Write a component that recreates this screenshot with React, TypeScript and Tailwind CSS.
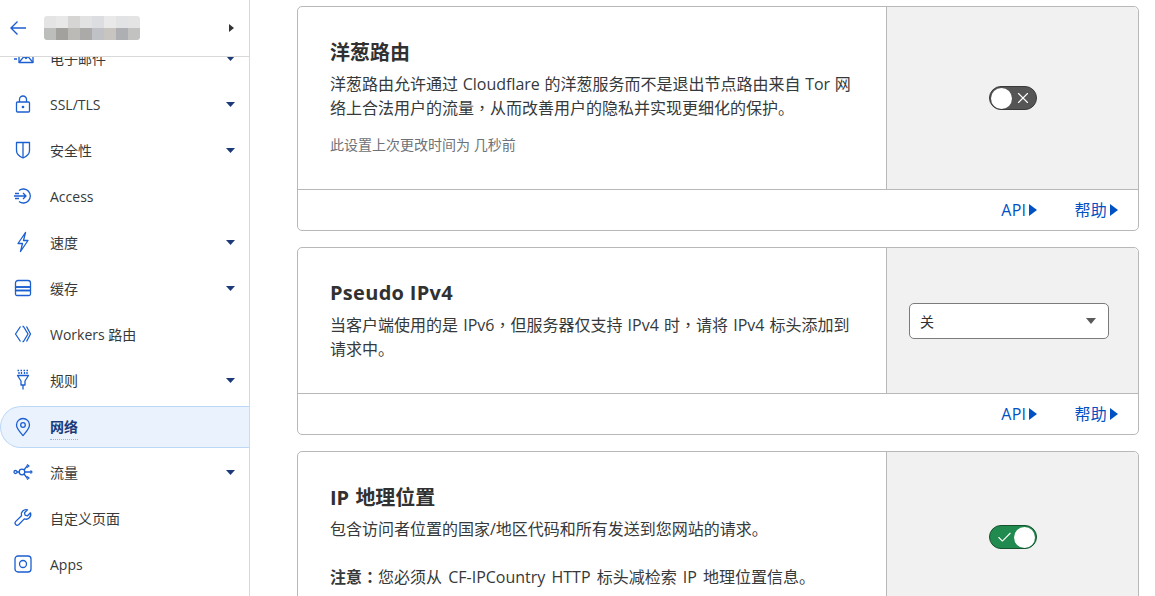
import React from 'react';
import { Check, X } from 'lucide-react';

const FONT = "font-['Open_Sans','Noto_Sans_CJK_SC',sans-serif]";

const Caret = () => (
  <svg width="9" height="5" viewBox="0 0 9 5" className="fill-[#1d3a78]">
    <path d="M0 0h9L4.500 5z" />
  </svg>
);

// the screenshot's full-width punctuation sits centred in its box
const Punct = ({ children }: { children: React.ReactNode }) => (
  <span className="leading-none font-['Noto_Sans_CJK_TC',sans-serif]">{children}</span>
);

const icons: Record<string, React.ReactNode> = {
  mail: (
    <>
      <path d="M8 3.500h14v13H8z" />
      <path d="M8 16.500l5-6 2 2 2-2 5 6M8 3.500l7 7 7-7" />
      <path d="M2 9h4M3 13h3" />
    </>
  ),
  lock: (
    <>
      <rect x="5.500" y="10" width="13" height="10" rx="1" />
      <path d="M8.500 10V7.500a3.500 3.500 0 0 1 7 0V10" />
      <circle cx="12" cy="15" r="0.7" />
    </>
  ),
  shield: (
    <>
      <path d="M5.500 4.500h13v8c0 3.500-3 6-6.500 7.500-3.500-1.500-6.500-4-6.500-7.500z" />
      <path d="M12 4.500V20" />
    </>
  ),
  access: (
    <>
      <path d="M3 12h12M12 9l3 3-3 3" />
      <path d="M8 6.500a7 7 0 1 1 0 11" />
      <path d="M4 9.500h4M4 14.500h4" />
    </>
  ),
  bolt: <path d="M14.500 2.500 7 13.500h4.500L9.500 21.500l7.500-11h-4.500z" />,
  stack: (
    <>
      <path d="M7 4.500h10a2.500 2.500 0 0 1 2.500 2.500v4h-15V7A2.500 2.500 0 0 1 7 4.500z" />
      <path d="M4.500 11h15v3.500h-15z" />
      <path d="M4.500 14.500h15v3.500a1.500 1.500 0 0 1-1.500 1.500H6A1.500 1.500 0 0 1 4.500 18z" />
    </>
  ),
  workers: (
    <>
      <path d="M9.500 4.500 4.500 12l5 7.500" />
      <path d="M11.500 4.500h1L17 12l-4.500 7.500h-1" />
      <path d="M15.500 4.500 19.500 12l-4 7.500" />
    </>
  ),
  rules: (
    <>
      <path d="M6.500 7.500h11L14 13v4h-4v-4z" />
      <path d="M8 4v2M10.500 4v2M13.500 4v2M16 4v2M12 17v4.500" />
      <path d="M6.500 2.500h11" strokeDasharray="1.500 1.500" />
    </>
  ),
  pin: (
    <>
      <path d="M12 20.500C8.500 16.500 5.500 13.500 5.500 10a6.500 6.500 0 0 1 13 0c0 3.500-3 6.500-6.500 10.500z" />
      <circle cx="12" cy="10" r="2.300" />
    </>
  ),
  traffic: (
    <>
      <circle cx="4.500" cy="12" r="1.500" />
      <circle cx="11" cy="12" r="2.800" />
      <path d="M6 12h2.200M13 10l3.500-4.500M13 14l3.500 4.500M13.800 12H20" />
      <path d="M16 4.500l2 1.500-2 1.500M16 16.500l2 1.500-2 1.500M19.500 10.500l1.500 1.500-1.500 1.500" />
    </>
  ),
  wrench: (
    <path d="M19.500 6.800l-3 3-2.400-.6-.6-2.400 3-3a4.800 4.800 0 0 0-6 6L4.500 15.600a2.200 2.200 0 0 0 3.100 3.100l5.700-5.800a4.800 4.800 0 0 0 6.200-6.100z" />
  ),
  apps: (
    <>
      <rect x="4" y="4" width="16" height="16" rx="3" />
      <circle cx="12" cy="12" r="3.500" />
    </>
  ),
};

const NavIcon = ({ name }: { name: string }) => (
  <svg
    width="24"
    height="24"
    viewBox="0 0 24 24"
    fill="none"
    strokeWidth="1.3"
    strokeLinejoin="round"
    className="stroke-[#1b5fd0] shrink-0"
  >
    {icons[name]}
  </svg>
);

const NAV = [
  { label: '电子邮件', icon: 'mail', caret: true },
  { label: 'SSL/TLS', icon: 'lock', caret: true },
  { label: '安全性', icon: 'shield', caret: true },
  { label: 'Access', icon: 'access' },
  { label: '速度', icon: 'bolt', caret: true },
  { label: '缓存', icon: 'stack', caret: true },
  { label: 'Workers 路由', icon: 'workers' },
  { label: '规则', icon: 'rules', caret: true },
  { label: '网络', icon: 'pin', active: true },
  { label: '流量', icon: 'traffic', caret: true },
  { label: '自定义页面', icon: 'wrench' },
  { label: 'Apps', icon: 'apps' },
];

const Sidebar = () => (
  <aside className="w-[250px] shrink-0 h-full border-r border-[#d9d9d9] flex flex-col bg-white">
    <div className="h-[57px] shrink-0 border-b border-[#d9d9d9] flex items-center pl-[9px] pr-[15px] bg-white">
      <svg width="18" height="16" viewBox="0 0 18 16" fill="none" strokeWidth="1.4" className="stroke-[#1b5fd0]">
        <path d="M17 8H2M8.500 1.500 2 8l6.500 6.500" />
      </svg>
      <div className="ml-[17px] w-[96px] h-[24px] grid grid-cols-8 grid-rows-2 rounded-[3px] overflow-hidden">
        {['#e4e4e4', '#e8e8e8', '#d6d5d4', '#e2e2e2', '#dcdde0', '#e9e9e9', '#e2e3e4', '#e4e4e5', '#bcbebb', '#a3a19e', '#bbbab7', '#abaaa8', '#c0c1c6', '#c8c4bf', '#adafb2', '#c2c2c0'].map((c, i) => (
          <div key={i} style={{ backgroundColor: c }} />
        ))}
      </div>
      <div className="ml-auto w-0 h-0 border-y-[4px] border-y-transparent border-l-[5px] border-l-[#333]" />
    </div>
    <div className="flex-1 overflow-hidden">
      <div className="-mt-[22px]">
        {NAV.map(item => (
          <div
            key={item.label}
            className={
              item.active
                ? 'h-[42px] mt-[3px] mb-[1px] pl-[10px] pr-[14px] flex items-center rounded-l-[21px] bg-[#eaf2fd] border-y border-l border-[#bcd8f7] text-[14px] text-[#1d3a78] font-semibold'
                : 'h-[46px] pl-[11px] pr-[14px] flex items-center text-[14px] text-[#36393a]'
            }
          >
            <NavIcon name={item.icon} />
            <span className={item.active ? 'ml-[15px] border-b border-dotted border-[#8fb3e8] leading-[20px] pb-[2px] mt-[2px]' : 'ml-[15px]'}>
              {item.label}
            </span>
            {item.caret && (
              <span className="ml-auto flex">
                <Caret />
              </span>
            )}
          </div>
        ))}
      </div>
    </div>
  </aside>
);

const Links = () => (
  <div className="h-[40px] flex items-center justify-end pr-[20px] gap-[37px] text-[16px] text-[#0051c3]">
    {['API', '帮助'].map(l => (
      <span key={l} className="flex items-center tracking-[0.3px]">
        {l}
        <span className="ml-[3px] w-0 h-0 border-y-[6.500px] border-y-transparent border-l-[8px] border-l-[#0051c3]" />
      </span>
    ))}
  </div>
);

const Toggle = ({ on }: { on: boolean }) =>
  on ? (
    <div className="w-[48px] h-[24px] rounded-full bg-[#218a4f] border border-[#14532d] flex items-center justify-between pl-[6px] pr-[1px]">
      <Check size={17} strokeWidth={1.5} className="text-white" />
      <div className="w-[21px] h-[21px] rounded-full bg-white" />
    </div>
  ) : (
    <div className="w-[48px] h-[24px] rounded-full bg-[#555555] border border-[#3a3a3a] flex items-center justify-between pl-[1px] pr-[4px]">
      <div className="w-[21px] h-[21px] rounded-full bg-white" />
      <X size={18} strokeWidth={1.5} className="text-white" />
    </div>
  );

const Card = ({
  control,
  footer = true,
  bodyH,
  children,
  last,
}: {
  control: React.ReactNode;
  footer?: boolean;
  bodyH: string;
  children: React.ReactNode;
  last?: boolean;
}) => (
  <section className={last ? 'border border-[#b8b8b8] rounded-t-[5px] shrink-0' : 'border border-[#b8b8b8] rounded-[5px] shrink-0'}>
    <div className={`flex ${bodyH}`}>
      <div className="flex-1 pl-[32px] pr-[30px]">{children}</div>
      <div className="w-[252px] shrink-0 border-l border-[#b8b8b8] bg-[#f1f1f1] rounded-tr-[5px] flex justify-center">
        {control}
      </div>
    </div>
    {footer && (
      <div className="border-t border-[#b8b8b8]">
        <Links />
      </div>
    )}
  </section>
);

export default function App() {
  return (
    <div className={`w-[1155px] h-[596px] overflow-hidden flex text-[#36393a] bg-white ${FONT}`}>
      <Sidebar />
      <main className="flex-1 h-full overflow-hidden pl-[47px] pr-[16px] pt-[6px] flex flex-col gap-[16px]">
        <Card
          bodyH="h-[182px]"
          control={
            <div className="mt-[79px]">
              <Toggle on={false} />
            </div>
          }
        >
          <h3 className="mt-[32px] text-[20px] leading-[28px] font-bold text-[#313131]">洋葱路由</h3>
          <p className="mt-[5px] text-[16px] leading-[24px] text-[#36393a] [word-spacing:0.5px]">
            洋葱路由允许通过 Cloudflare 的洋葱服务而不是退出节点路由来自 Tor 网络上合法用户的流量<Punct>，</Punct>从而改善用户的隐私并实现更细化的保护。
          </p>
          <p className="mt-[15px] text-[14px] leading-[20px] text-[#6d7278]">此设置上次更改时间为 几秒前</p>
        </Card>
        <Card
          bodyH="h-[145px]"
          control={
            <div className="mt-[55px] mr-[7px] w-[200px] h-[36px] rounded-[5px] border border-[#7b7b7b] bg-white flex items-center justify-between pl-[10px] pr-[12px] text-[14px] text-[#313131]">
              关
              <svg width="10" height="6" viewBox="0 0 10 6" className="fill-[#5a5a5a]">
                <path d="M0 0h10L5 6z" />
              </svg>
            </div>
          }
        >
          <h3 className="mt-[31px] text-[20px] leading-[28px] font-bold tracking-[0.3px] text-[#313131]">Pseudo IPv4</h3>
          <p className="mt-[6px] text-[16px] leading-[24px] text-[#36393a] [word-spacing:1px]">
            当客户端使用的是 IPv6<Punct>，</Punct>但服务器仅支持 IPv4 时<Punct>，</Punct>请将 IPv4 标头添加到请求中。
          </p>
        </Card>
        <Card
          bodyH="h-[200px]"
          footer={false}
          last
          control={
            <div className="mt-[73px]">
              <Toggle on />
            </div>
          }
        >
          <h3 className="mt-[32px] text-[20px] leading-[28px] font-bold [word-spacing:1px] text-[#313131]">IP 地理位置</h3>
          <p className="mt-[5px] text-[16px] leading-[24px] text-[#36393a]">
            包含访问者位置的国家/地区代码和所有发送到您网站的请求。
          </p>
          <p className="mt-[24px] text-[16px] leading-[24px] text-[#36393a] [word-spacing:2px]">
            <strong className="font-bold">注意<Punct>：</Punct></strong>您必须从 CF-IPCountry HTTP 标头减检索 IP 地理位置信息。
          </p>
        </Card>
      </main>
    </div>
  );
}
